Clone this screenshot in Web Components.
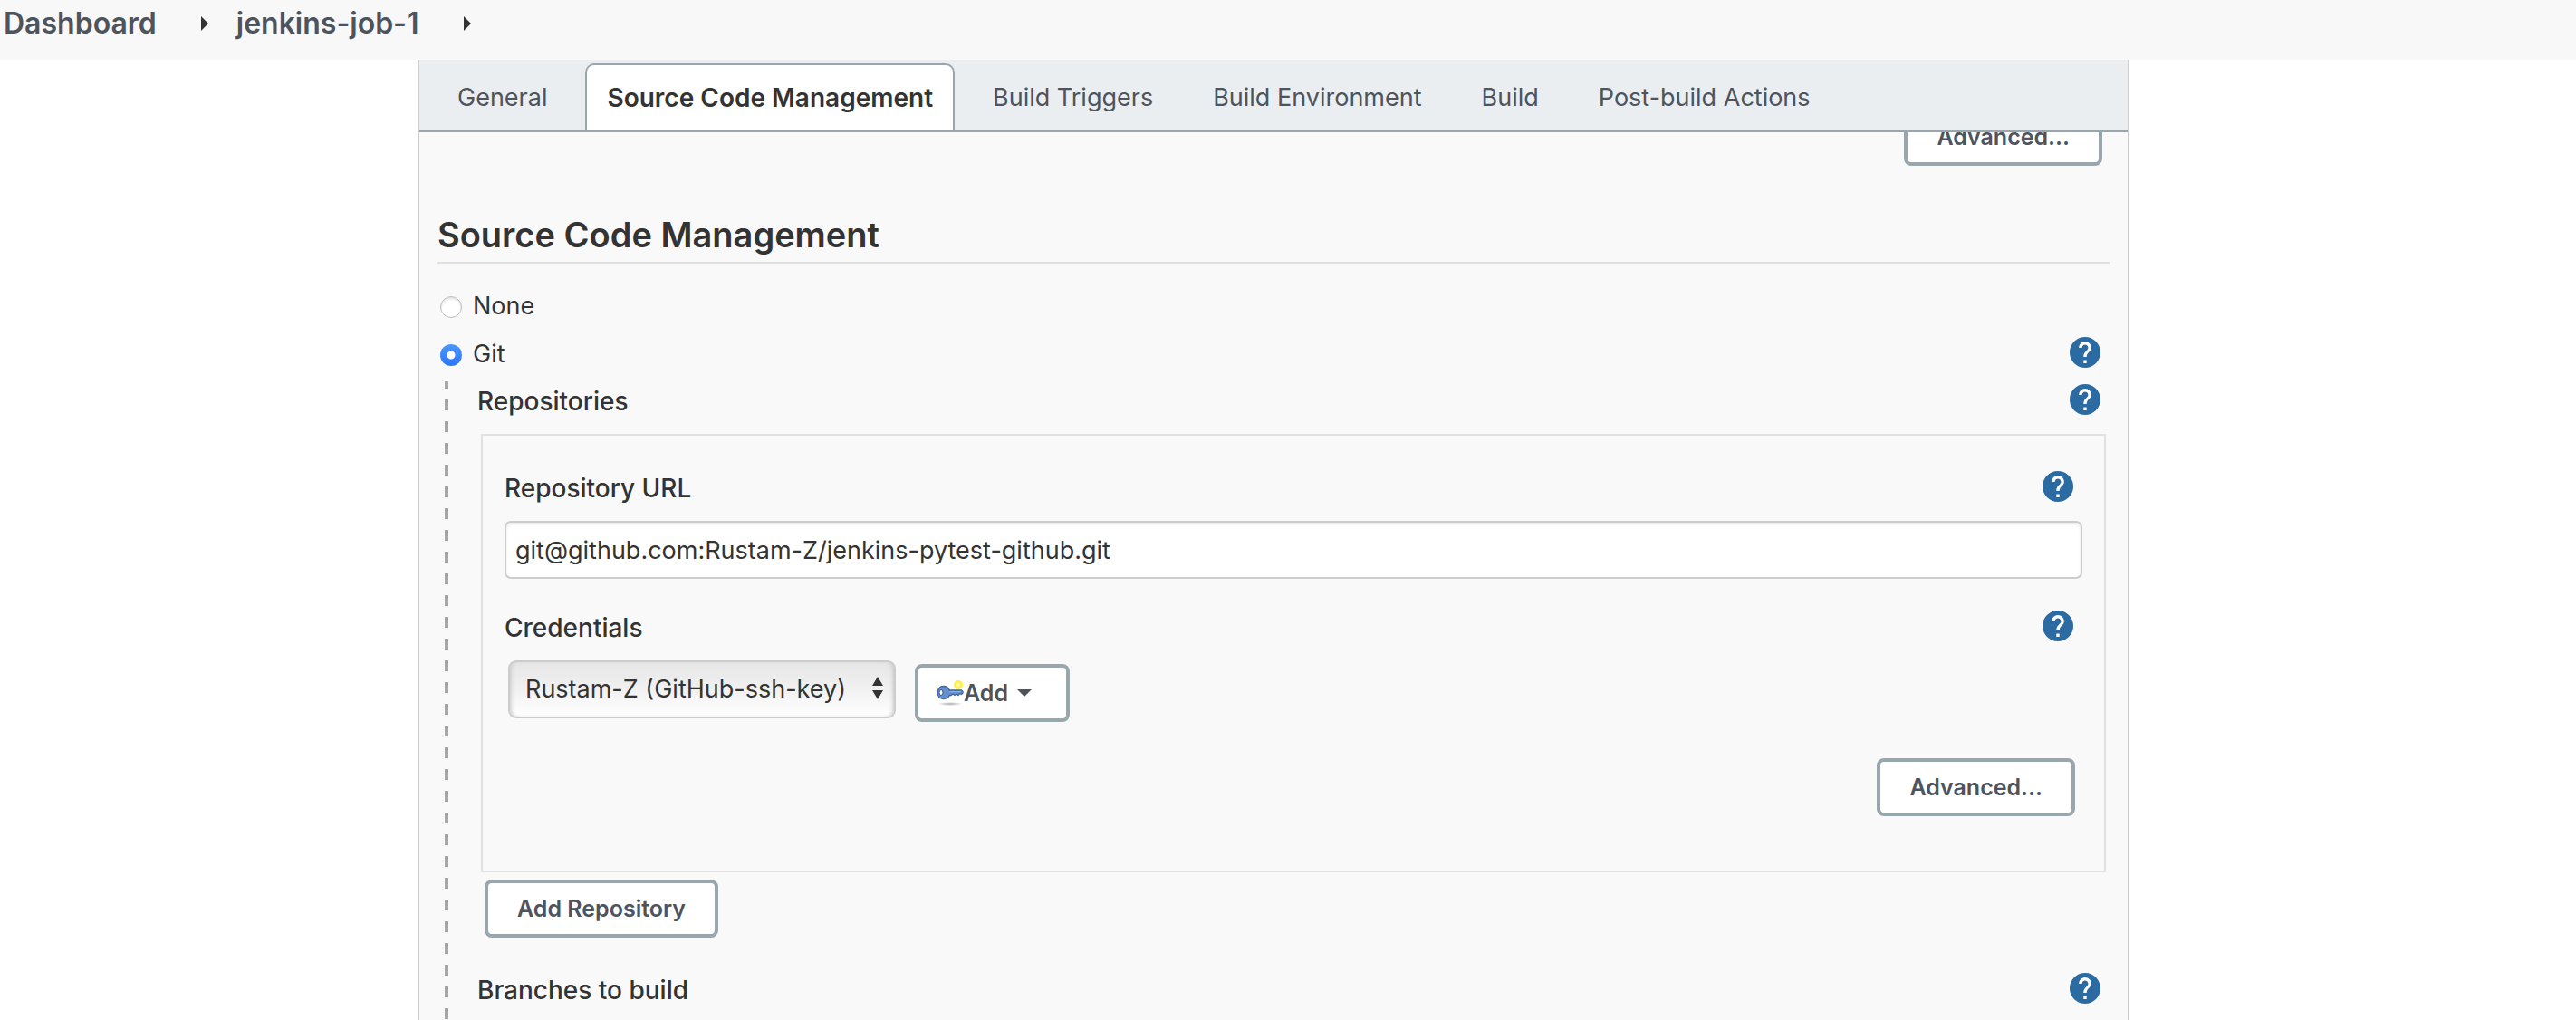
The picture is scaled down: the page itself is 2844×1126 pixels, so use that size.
<!DOCTYPE html>
<html lang="en">
<head>
<meta charset="utf-8">
<title>jenkins-job-1 Config</title>
<style>
  html, body { height: 100%; }
  body {
    margin: 0;
    background: #fff;
    color: #333;
    font-family: Inter, "Liberation Sans", sans-serif;
    font-size: 27px;
    line-height: 44px;
    overflow: hidden;
  }
</style>
</head>
<body>
<jk-page>
  <jk-breadcrumbs slot="header"></jk-breadcrumbs>
  <jk-tabs slot="tabs"></jk-tabs>
  <jk-scm-section></jk-scm-section>
</jk-page>

<script>
  const define = (name, html) => {
    const template = document.createElement('template');
    template.innerHTML = html;
    customElements.define(name, class extends HTMLElement {
      constructor() {
        super();
        this.attachShadow({ mode: 'open' }).append(template.content.cloneNode(true));
      }
    });
  };

  define('jk-page', `
    <style>
      :host { display: flex; flex-direction: column; height: 100vh; overflow: hidden; }
      .panel {
        flex: 1; min-height: 0; display: flex; flex-direction: column;
        margin: 0 493px 0 461px;
        border: solid #ccc; border-width: 0 2px;
        background: #f9f9f9;
      }
      main { flex: 1; min-height: 0; overflow: hidden; display: flex; flex-direction: column; }
    </style>
    <slot name="header"></slot>
    <div class="panel">
      <slot name="tabs"></slot>
      <main><slot></slot></main>
    </div>`);

  define('jk-breadcrumbs', `
    <style>
      :host { display: block; background: #f8f8f8; }
      nav { display: flex; align-items: center; padding: 4px 4px 18px; font-size: 32px; font-weight: 600; }
      a { color: #4d545d; text-decoration: none; }
      svg { width: 8px; height: 16px; fill: #333; margin: 0 31px 0 49px; }
    </style>
    <nav aria-label="Breadcrumb">
      <a href="#">Dashboard</a><svg viewBox="0 0 8 16"><path d="M0 0L8 8L0 16Z"/></svg>
      <a href="#">jenkins-job-1</a><svg viewBox="0 0 8 16"><path d="M0 0L8 8L0 16Z"/></svg>
    </nav>`);

  define('jk-tabs', `
    <style>
      :host { display: block; background: #eaeef1; border-bottom: 2px solid #9aa6ad; }
      nav { display: flex; gap: 18px; padding: 4px 18px 0; }
      a {
        box-sizing: border-box; height: 74px; padding: 14px 22px 0;
        border: 2px solid transparent; border-bottom: 0; border-radius: 10px 10px 0 0;
        color: #4d545d; text-decoration: none; white-space: nowrap;
      }
      a[aria-current] { background: #fff; border-color: #9aa6ad; color: #333; font-size: 28px; font-weight: 600; }
    </style>
    <nav aria-label="Configuration sections">
      <a href="#">General</a>
      <a href="#" aria-current="true">Source Code Management</a>
      <a href="#">Build Triggers</a>
      <a href="#">Build Environment</a>
      <a href="#">Build</a>
      <a href="#">Post-build Actions</a>
    </nav>`);

  define('jk-button', `
    <style>
      :host { display: inline-flex; }
      button {
        display: flex; align-items: center; height: 64px; box-sizing: border-box; padding: 0 32px;
        border: 4px solid #9aa6ad; border-radius: 8px; background: #fff;
        color: #4d545d; font: 600 25px/32px Inter, "Liberation Sans", sans-serif; white-space: nowrap;
      }
      :host([menu]) button { padding: 0 38px 0 20px; }
    </style>
    <button type="button"><slot></slot></button>`);

  define('jk-help', `
    <style>
      :host { display: block; margin: 0 10px 4px 0; }
      button { display: block; width: 34px; height: 34px; padding: 0; border: 0; border-radius: 50%; background: none; }
      svg { display: block; width: 34px; height: 34px; fill: #2c6ba1; }
    </style>
    <button type="button" aria-label="Help"><svg viewBox="2 2 20 20"><circle cx="12" cy="12" r="9" fill="#fff"/><path d="M12 2C6.48 2 2 6.48 2 12s4.48 10 10 10 10-4.48 10-10S17.52 2 12 2zm1 17h-2v-2h2v2zm2.07-7.75l-.9.92C13.45 12.9 13 13.5 13 15h-2v-.5c0-1.1.45-2.1 1.17-2.83l1.24-1.26c.37-.36.59-.86.59-1.41 0-1.1-.9-2-2-2s-2 .9-2 2H8c0-2.21 1.79-4 4-4s4 1.79 4 4c0 .88-.36 1.68-.93 2.25z"/></svg></button>`);

  define('jk-row', `
    <style>
      :host { display: flex; align-items: center; justify-content: space-between; height: 44px; font-size: 28px; font-weight: 500; }
    </style>
    <slot></slot><jk-help></jk-help>`);

  define('jk-radio-list', `
    <style>
      :host { display: block; padding-top: 20px; }
      .option { display: flex; align-items: center; justify-content: space-between; height: 53px; }
      label { display: flex; align-items: center; gap: 12px; padding-left: 3px; }
      input {
        appearance: none; width: 24px; height: 24px; margin: 2px 0 0; box-sizing: border-box;
        border: 1px solid #bdbdbd; border-radius: 50%; background: #fff;
        box-shadow: inset 0 2px 3px #e2e2e2;
      }
      input:checked {
        border: 0; box-shadow: none;
        background: radial-gradient(circle, #fff 4px, transparent 5px), linear-gradient(#4b98fa, #2d75f5);
      }
    </style>
    <div class="option"><label><input type="radio" name="scm">None</label></div>
    <div class="option"><label><input type="radio" name="scm" checked>Git</label><jk-help></jk-help></div>`);

  define('jk-text-field', `
    <style>
      :host { display: block; }
      input {
        display: block; width: 100%; height: 64px; box-sizing: border-box; margin-top: 14px; padding: 0 10px;
        border: 2px solid #ccc; border-radius: 7px; background: #fff; box-shadow: inset 0 2px 3px #ececec;
        color: #333; font: 27px/44px Inter, "Liberation Sans", sans-serif;
      }
    </style>
    <jk-row><label for="url">Repository URL</label></jk-row>
    <input id="url" type="text" value="git@github.com:Rustam-Z/jenkins-pytest-github.git">`);

  define('jk-credentials', `
    <style>
      :host { display: block; margin-top: 32px; }
      .controls { display: flex; align-items: flex-end; gap: 21px; height: 68px; margin: 14px 0 0 4px; }
      .select { position: relative; align-self: flex-start; }
      select {
        appearance: none; display: block; height: 64px; box-sizing: border-box; padding: 0 52px 0 17px;
        border: 2px solid #ccc; border-radius: 9px;
        background: linear-gradient(#e6e6e6, #f1f1f1 50%, #fff);
        box-shadow: inset 4px 0 5px -3px #c4c4c4, inset -4px 0 5px -3px #c4c4c4;
        color: #333; font: 27px/44px Inter, "Liberation Sans", sans-serif;
      }
      .arrows { position: absolute; right: 14px; top: 18px; width: 12px; height: 25px; fill: #333; pointer-events: none; }
      .key { width: 30px; height: 30px; }
      .caret { width: 16px; height: 8px; margin-left: 10px; fill: #4d545d; }
    </style>
    <jk-row><label for="cred">Credentials</label></jk-row>
    <div class="controls">
      <div class="select">
        <select id="cred"><option>Rustam-Z (GitHub-ssh-key)</option></select>
        <svg class="arrows" viewBox="0 0 12 25"><path d="M6 0L12 10H0ZM0 15H12L6 25Z"/></svg>
      </div>
      <jk-button menu>
        <svg class="key" viewBox="0 0 30 30">
          <defs><radialGradient id="shade"><stop offset="0" stop-color="#aaa"/><stop offset="1" stop-color="#aaa" stop-opacity="0"/></radialGradient></defs>
          <ellipse cx="15" cy="27" rx="14" ry="2" fill="url(#shade)"/>
          <circle cx="24" cy="6" r="3.5" fill="#fffbb0" stroke="#fff04d" stroke-width="3.2"/>
          <path d="M7.500 7.500C11 7.500 13.200 9.300 14.300 12H27.500L29 13.500V15L27.500 16.500L25.500 15.500L24 17.500L22 16L20 17.500L18 16L16 17.500H14.300C13 20.300 11 21.500 7.500 21.500C3.500 21.500 1 18.300 1 14.500S3.500 7.500 7.500 7.500Z" fill="#6590cd" stroke="#3b65a6" stroke-width="1.300"/>
          <ellipse cx="5" cy="14.500" rx="2" ry="3" fill="#fff" stroke="#34517e"/>
          <path d="M14.500 13.600H27" stroke="#99b7e2"/>
        </svg>Add<svg class="caret" viewBox="0 0 16 8"><path d="M0 0H16L8 8Z"/></svg>
      </jk-button>
    </div>`);

  define('jk-repository', `
    <style>
      :host { display: block; margin: 14px 4px 0; padding: 36px 24px 60px; border: 2px solid #e0e0e0; }
      .actions { display: flex; justify-content: flex-end; margin: 40px 8px 0 0; }
    </style>
    <jk-text-field></jk-text-field>
    <jk-credentials></jk-credentials>
    <div class="actions"><jk-button>Advanced...</jk-button></div>`);

  define('jk-scm-section', `
    <style>
      :host { flex: 1; display: flex; flex-direction: column; padding: 0 20px; }
      /* the page is scrolled: the previous section's last button slides under the tab bar */
      .previous { display: flex; justify-content: flex-end; margin: -27px 8px 0 0; }
      h2 {
        margin: 52px 0 0; padding-bottom: 6px; border-bottom: 2px solid #e0e0e0;
        font-size: 38px; line-height: 48px; font-weight: 600;
      }
      .nested {
        flex: 1; margin: 4px 0 0 8px; padding-left: 36px;
        background: repeating-linear-gradient(#a6a6a6 0 8px, transparent 8px 20px, #a6a6a6 20px 24px) 0 0 / 4px 100% no-repeat;
      }
      .add { display: flex; margin: 8px 0 36px 8px; }
    </style>
    <div class="previous"><jk-button>Advanced...</jk-button></div>
    <h2>Source Code Management</h2>
    <jk-radio-list></jk-radio-list>
    <div class="nested">
      <jk-row>Repositories</jk-row>
      <jk-repository></jk-repository>
      <jk-button class="add">Add Repository</jk-button>
      <jk-row>Branches to build</jk-row>
    </div>`);
</script>
</body>
</html>
